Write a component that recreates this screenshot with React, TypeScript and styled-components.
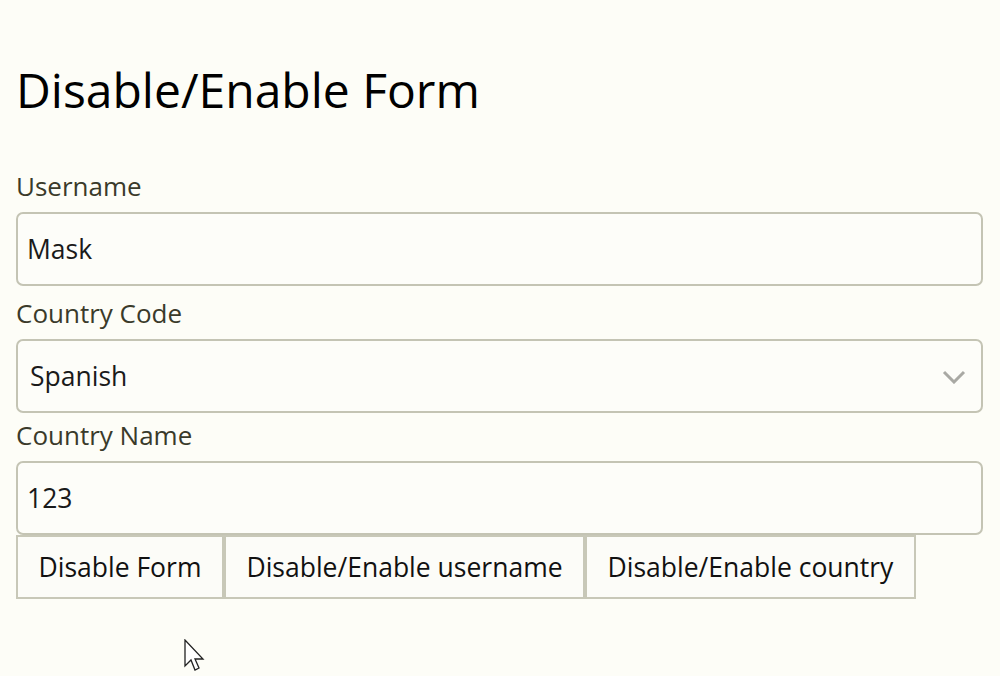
import React, { useState } from "react";
import styled, { createGlobalStyle } from "styled-components";

const GlobalStyle = createGlobalStyle`
    html, body {
        margin: 0;
        padding: 0;
        background: #fdfdf7;
        font-family: "Open Sans", "Liberation Sans", sans-serif;
        color: #111;
    }
`;

const Page = styled.div`
    position: relative;
    height: 676px;
    padding: 58px 16px 0 16px;
    box-sizing: border-box;
    overflow: hidden;
`;

const Title = styled.h1`
    margin: 0 0 46px 0;
    font-size: 48px;
    font-weight: 400;
    line-height: 64px;
    color: #000;
`;

const Form = styled.form`
    display: flex;
    flex-direction: column;
`;

const Label = styled.label`
    display: block;
    font-size: 26px;
    line-height: 36px;
    color: #3a3a2a;
    margin-bottom: 8px;
`;

const fieldBox = `
    width: 967px;
    height: 74px;
    box-sizing: border-box;
    border: 2px solid #c4c4b4;
    border-radius: 7px;
    background: #fdfdf9;
    font-family: "Open Sans", "Liberation Sans", sans-serif;
    font-size: 26.5px;
    color: #1a1a1a;
    outline: none;
`;

const TextInput = styled.input<{ $gap: number }>`
    ${fieldBox}
    padding: 0 9px;
    margin-bottom: ${(p) => p.$gap}px;
`;

const SelectWrap = styled.div`
    position: relative;
    width: 967px;
    margin-bottom: 4px;
`;

const Select = styled.select`
    ${fieldBox}
    appearance: none;
    padding: 0 12px;
`;

const Chevron = styled.svg`
    position: absolute;
    right: 17px;
    top: 31px;
    pointer-events: none;
`;

const ButtonRow = styled.div`
    display: flex;
`;

const Button = styled.button`
    height: 64px;
    box-sizing: border-box;
    padding: 0 20.5px;
    border: 2px solid #c8c8b8;
    border-radius: 0;
    background: #fcfcf8;
    font-family: "Open Sans", "Liberation Sans", sans-serif;
    font-size: 26.5px;
    color: #111;
    cursor: pointer;
`;

const Cursor = styled.svg`
    position: absolute;
    left: 184px;
    top: 639px;
`;

export default function App() {
    const [username, setUsername] = useState("Mask");
    const [code, setCode] = useState("es");
    const [name, setName] = useState("123");

    return (
        <Page>
            <GlobalStyle />
            <Title>Disable/Enable Form</Title>
            <Form onSubmit={(e) => e.preventDefault()}>
                <Label>Username</Label>
                <TextInput $gap={9} value={username} onChange={(e) => setUsername(e.target.value)} />
                <Label>Country Code</Label>
                <SelectWrap>
                    <Select value={code} onChange={(e) => setCode(e.target.value)}>
                        <option value="es">Spanish</option>
                        <option value="en">English</option>
                    </Select>
                    <Chevron width="24" height="14" viewBox="0 0 24 14">
                        <path d="M2 2 L12 12 L22 2" fill="none" stroke="#a9a9a4" strokeWidth="3" />
                    </Chevron>
                </SelectWrap>
                <Label>Country Name</Label>
                <TextInput $gap={0} value={name} onChange={(e) => setName(e.target.value)} />
                <ButtonRow>
                    <Button type="button">Disable Form</Button>
                    <Button type="button">Disable/Enable username</Button>
                    <Button type="button">Disable/Enable country</Button>
                </ButtonRow>
            </Form>
            <Cursor width="24" height="38" viewBox="0 0 24 38">
                <path d="M1 1 L1 27 L7 21 L11 31 L15 29 L11 20 L19 20 Z" fill="#fff" stroke="#222" strokeWidth="1.3" strokeLinejoin="miter" />
            </Cursor>
        </Page>
    );
}
